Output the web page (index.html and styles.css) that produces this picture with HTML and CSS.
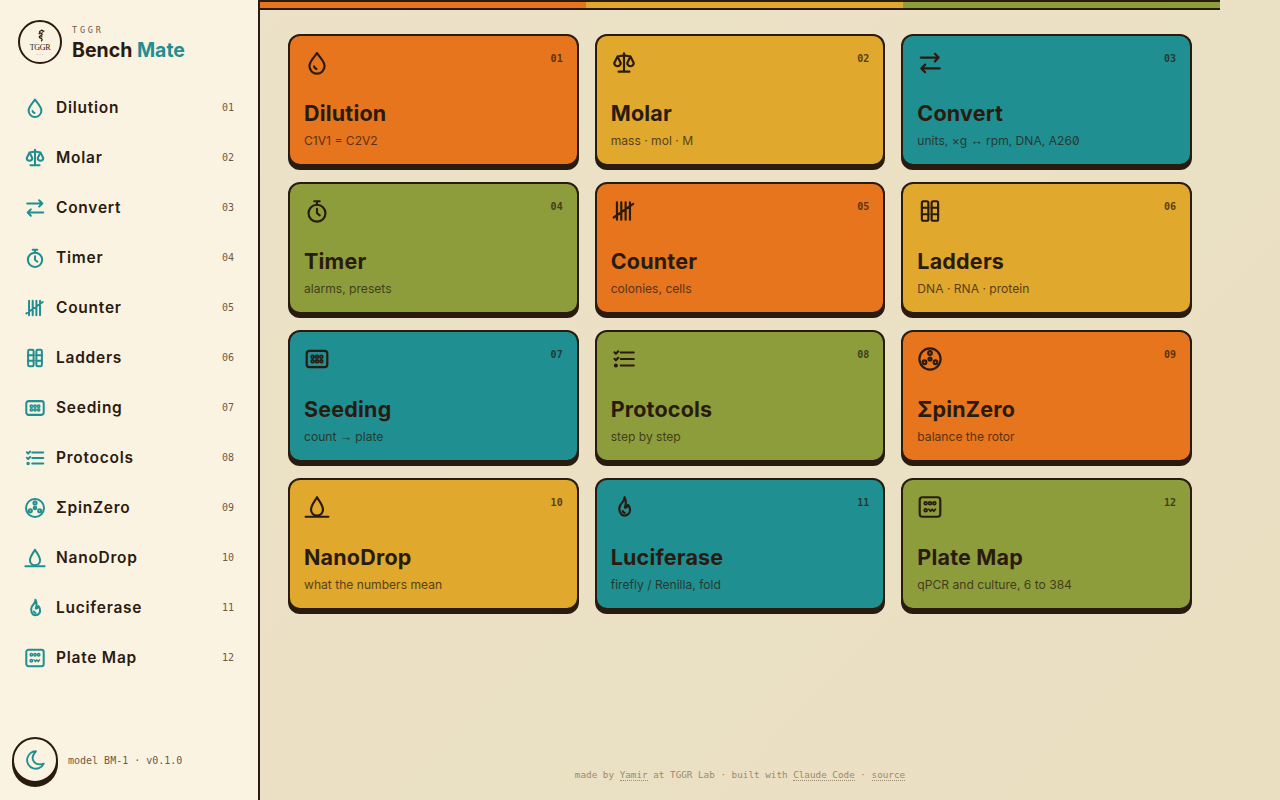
FILE: index.html
```html
<!DOCTYPE html>
<html lang="en">
<head>
  <meta charset="UTF-8" />
  <meta name="viewport" content="width=device-width, initial-scale=1.0"/>
  <title>Bench Mate</title>
  <link rel="stylesheet" href="styles.css">
</head>
<body>

<!-- Icon set, used by both the sidebar and the cards -->
<svg class="icon-defs" aria-hidden="true">
  <symbol id="i-drop" viewBox="0 0 24 24"><path d="M12 2.8C10 6 5 10.400 5 14.800a7 7 0 0 0 14 0C19 10.400 14 6 12 2.800z"/><path d="M9.300 15.200c.3 1.100 1.100 1.900 2.200 2.200"/></symbol>
  <symbol id="i-scale" viewBox="0 0 24 24"><path d="M7 20h10M6 6l6-1 6 1M12 3v17M9 12 6 6l-3 6a3 3 0 0 0 6 0M21 12l-3-6-3 6a3 3 0 0 0 6 0"/></symbol>
  <symbol id="i-convert" viewBox="0 0 24 24"><path d="M16.500 3.500 20 7l-3.500 3.500M3.500 7H20M7.500 13.500 4 17l3.500 3.500M4 17h17"/></symbol>
  <symbol id="i-timer" viewBox="0 0 24 24"><circle cx="12" cy="14" r="7.800"/><path d="M9.500 3h5M12 3v3M12 10v4l2.500 2"/></symbol>
  <symbol id="i-tally" viewBox="0 0 24 24"><path d="M5.500 4v16M9.500 4v16M13.500 4v16M17.500 4v16M2.500 18 20.500 5.500"/></symbol>
  <symbol id="i-ladder" viewBox="0 0 24 24"><rect x="4.500" y="3" width="6" height="18" rx="1.500"/><rect x="13.500" y="3" width="6" height="18" rx="1.500"/><path d="M4.500 9h6M4.500 15h6M13.500 9h6M13.500 15h6"/></symbol>
  <symbol id="i-seed" viewBox="0 0 24 24"><rect x="2.500" y="4.500" width="19" height="15" rx="2.500"/><g class="fine"><circle cx="8" cy="10" r="1.300"/><circle cx="12" cy="10" r="1.300"/><circle cx="16" cy="10" r="1.300"/><circle cx="8" cy="14" r="1.300"/><circle cx="12" cy="14" r="1.300"/><circle cx="16" cy="14" r="1.300"/></g></symbol>
  <symbol id="i-list" viewBox="0 0 24 24"><path d="M3.200 5.800l1.300 1.300 2.200-2.200M3.200 11.800l1.300 1.300 2.200-2.200M9 6h12M9 12h12M9 18h12"/><circle cx="4.500" cy="18" r=".9"/></symbol>
  <symbol id="i-rotor" viewBox="0 0 24 24"><circle cx="12" cy="12" r="9.800"/><circle cx="12" cy="12" r="1.400"/><circle cx="12" cy="6.500" r="1.700"/><circle cx="6.900" cy="15" r="1.700"/><circle cx="17.100" cy="15" r="1.700"/></symbol>
  <symbol id="i-nano" viewBox="0 0 24 24"><path d="M12 3C10.500 6 6.500 10 6.500 14.500a5.500 5.500 0 0 0 11 0C17.500 10 13.500 6 12 3z"/><path d="M1.500 21h21"/></symbol>
  <symbol id="i-flame" viewBox="0 0 24 24"><path d="M12.500 3c.3 3-2.600 5-4 7.500-2.100 4 .3 9.500 4 9.500 3.600 0 5.800-3.300 4.800-7-.3-1.200-.9-2.200-1.500-3-.5 1.500-1.400 2.600-3 2.600 1.200-3.200 1-7-.3-9.600z"/><path d="M10.800 15.800c.3 1 .9 1.500 1.800 1.600"/></symbol>
  <symbol id="i-plate" viewBox="0 0 24 24"><rect x="2.500" y="3" width="19" height="18" rx="2.500"/><g class="fine"><circle cx="8" cy="8.500" r="1.300"/><circle cx="12" cy="8.500" r="1.300"/><circle cx="16" cy="8.500" r="1.300"/><circle cx="8" cy="15" r="1.300"/><path d="M11 14l1.500 2 1.500-2 1.500 2 1.500-2"/></g></symbol>
  <symbol id="i-moon" viewBox="0 0 24 24"><path d="M13 2.500A9.500 9.500 0 1 0 21.500 16C12 19 5 11 13 2.500z"/></symbol>
</svg>

<aside class="sidebar">
  <div class="brand">
    <div class="brand-logo">
      <svg class="brand-mark" viewBox="0 0 24 24" aria-hidden="true"><path d="M15 2c-4 .5-6 3-3 4.500 3.500 1 3.500 3 .5 4-3 .8-3.500 3-.5 4 3 .8 3.500 3 1 5"/><path d="M13 1.500l4 2-3 2M9 7l3 1M15 12l-3 1"/></svg>
      <span class="brand-lab">TGGR</span>
      <span class="brand-dots">· · ·</span>
    </div>
    <div class="brand-text">
      <div class="brand-org">TGGR</div>
      <div class="brand-name">Bench <span class="accent">Mate</span></div>
    </div>
  </div>

  <nav class="nav">
    <a class="nav-item" href="#"><svg class="nav-icon"><use href="#i-drop"/></svg><span class="nav-label">Dilution</span><span class="nav-num">01</span></a>
    <a class="nav-item" href="#"><svg class="nav-icon"><use href="#i-scale"/></svg><span class="nav-label">Molar</span><span class="nav-num">02</span></a>
    <a class="nav-item" href="#"><svg class="nav-icon"><use href="#i-convert"/></svg><span class="nav-label">Convert</span><span class="nav-num">03</span></a>
    <a class="nav-item" href="#"><svg class="nav-icon"><use href="#i-timer"/></svg><span class="nav-label">Timer</span><span class="nav-num">04</span></a>
    <a class="nav-item" href="#"><svg class="nav-icon"><use href="#i-tally"/></svg><span class="nav-label">Counter</span><span class="nav-num">05</span></a>
    <a class="nav-item" href="#"><svg class="nav-icon"><use href="#i-ladder"/></svg><span class="nav-label">Ladders</span><span class="nav-num">06</span></a>
    <a class="nav-item" href="#"><svg class="nav-icon"><use href="#i-seed"/></svg><span class="nav-label">Seeding</span><span class="nav-num">07</span></a>
    <a class="nav-item" href="#"><svg class="nav-icon"><use href="#i-list"/></svg><span class="nav-label">Protocols</span><span class="nav-num">08</span></a>
    <a class="nav-item" href="#"><svg class="nav-icon"><use href="#i-rotor"/></svg><span class="nav-label">ΣpinZero</span><span class="nav-num">09</span></a>
    <a class="nav-item" href="#"><svg class="nav-icon"><use href="#i-nano"/></svg><span class="nav-label">NanoDrop</span><span class="nav-num">10</span></a>
    <a class="nav-item" href="#"><svg class="nav-icon"><use href="#i-flame"/></svg><span class="nav-label">Luciferase</span><span class="nav-num">11</span></a>
    <a class="nav-item" href="#"><svg class="nav-icon"><use href="#i-plate"/></svg><span class="nav-label">Plate Map</span><span class="nav-num">12</span></a>
  </nav>

  <div class="sidebar-foot">
    <button class="theme-btn" type="button" aria-label="Toggle theme"><svg class="theme-icon"><use href="#i-moon"/></svg></button>
    <span class="model">model BM-1 · v0.1.0</span>
  </div>
</aside>

<main class="main">
  <div class="stripe">
    <span class="orange"></span>
    <span class="yellow"></span>
    <span class="olive"></span>
  </div>

  <section class="grid">
    <a class="card orange" href="#"><span class="card-num">01</span><svg class="card-icon"><use href="#i-drop"/></svg><h3>Dilution</h3><p>C1V1 = C2V2</p></a>
    <a class="card yellow" href="#"><span class="card-num">02</span><svg class="card-icon"><use href="#i-scale"/></svg><h3>Molar</h3><p>mass · mol · M</p></a>
    <a class="card teal" href="#"><span class="card-num">03</span><svg class="card-icon"><use href="#i-convert"/></svg><h3>Convert</h3><p>units, ×g <span class="arrow">↔</span> rpm, DNA, A26<span class="slashed">0</span></p></a>
    <a class="card olive" href="#"><span class="card-num">04</span><svg class="card-icon"><use href="#i-timer"/></svg><h3>Timer</h3><p>alarms, presets</p></a>
    <a class="card orange" href="#"><span class="card-num">05</span><svg class="card-icon"><use href="#i-tally"/></svg><h3>Counter</h3><p>colonies, cells</p></a>
    <a class="card yellow" href="#"><span class="card-num">06</span><svg class="card-icon"><use href="#i-ladder"/></svg><h3>Ladders</h3><p>DNA · RNA · protein</p></a>
    <a class="card teal" href="#"><span class="card-num">07</span><svg class="card-icon"><use href="#i-seed"/></svg><h3>Seeding</h3><p>count <span class="arrow">→</span> plate</p></a>
    <a class="card olive" href="#"><span class="card-num">08</span><svg class="card-icon"><use href="#i-list"/></svg><h3>Protocols</h3><p>step by step</p></a>
    <a class="card orange" href="#"><span class="card-num">09</span><svg class="card-icon"><use href="#i-rotor"/></svg><h3>ΣpinZero</h3><p>balance the rotor</p></a>
    <a class="card yellow" href="#"><span class="card-num">10</span><svg class="card-icon"><use href="#i-nano"/></svg><h3>NanoDrop</h3><p>what the numbers mean</p></a>
    <a class="card teal" href="#"><span class="card-num">11</span><svg class="card-icon"><use href="#i-flame"/></svg><h3>Luciferase</h3><p>firefly / Renilla, fold</p></a>
    <a class="card olive" href="#"><span class="card-num">12</span><svg class="card-icon"><use href="#i-plate"/></svg><h3>Plate Map</h3><p>qPCR and culture, 6 to 384</p></a>
  </section>

  <footer class="foot">
    made by <a href="#">Yamir</a> at TGGR Lab · built with <a href="#">Claude Code</a> · <a href="#">source</a>
  </footer>
</main>

</body>
</html>
```

FILE: styles.css
```css
body {
  margin: 0;
  height: 100vh;
  display: flex;
  overflow: hidden;
  font-family: Inter, "Liberation Sans", sans-serif;
  color: #2a1b10;
  background: linear-gradient(135deg, #ece2c8, #eadfc1);
}
a {
  color: inherit;
  text-decoration: none;
}
.icon-defs {
  display: none;
}
symbol {
  overflow: visible;
}
.fine {
  stroke-width: 1.600;
}

/* shared colours */
.orange { background-color: #e6751e; }
.yellow { background-color: #e0a82c; }
.teal { background-color: #1f8f92; }
.olive { background-color: #8e9d3c; }

/* sidebar */
.sidebar {
  width: 258px;
  flex-shrink: 0;
  display: flex;
  flex-direction: column;
  background-color: #fbf3e2;
  border-right: 2px solid #2a1b10;
}
.brand {
  display: flex;
  align-items: center;
  gap: 10px;
  padding: 20px 18px 0;
  height: 44px;
}
.brand-logo {
  width: 40px;
  height: 40px;
  border: 2px solid #2a1b10;
  border-radius: 50%;
  display: flex;
  flex-direction: column;
  align-items: center;
  justify-content: center;
}
.brand-mark {
  width: 15px;
  height: 15px;
  fill: none;
  stroke: #2a1b10;
  stroke-width: 2;
}
.brand-lab {
  font-family: "Liberation Serif", serif;
  font-size: 8px;
  line-height: 8px;
  letter-spacing: -0.3px;
}
.brand-dots {
  font-size: 5px;
  line-height: 4px;
  color: #6b5a48;
}
.brand-text {
  padding-top: 4px;
}
.brand-org {
  font-family: "DejaVu Sans Mono", monospace;
  font-size: 8.500px;
  line-height: 11px;
  letter-spacing: 2.800px;
  margin-bottom: 2px;
  color: #6b5a48;
}
.brand-name {
  font-size: 19.500px;
  line-height: 25px;
  font-weight: 700;
}
.accent {
  color: #1f8f92;
}
.nav {
  display: flex;
  flex-direction: column;
  padding: 19px 12px 0;
}
.nav-item {
  height: 50px;
  display: flex;
  align-items: center;
  gap: 10px;
  padding: 0 12px;
}
.nav-icon {
  width: 22px;
  height: 22px;
  fill: none;
  stroke: #1f8f92;
  stroke-width: 2.200;
  stroke-linecap: round;
  stroke-linejoin: round;
}
.nav-label {
  flex: 1;
  padding-bottom: 2px;
  font-size: 15.500px;
  font-weight: 600;
  letter-spacing: 0.750px;
}
.nav-num {
  padding-bottom: 2px;
  font-family: "DejaVu Sans Mono", monospace;
  font-size: 10px;
  color: #6b5a48;
}
.sidebar-foot {
  margin-top: auto;
  display: flex;
  align-items: center;
  gap: 10px;
  padding: 0 12px 17px;
}
.theme-btn {
  width: 46px;
  height: 46px;
  padding: 0;
  display: flex;
  align-items: center;
  justify-content: center;
  background-color: #fbf3e2;
  border: 2px solid #2a1b10;
  border-radius: 50%;
  box-shadow: 0 4px 0 #2a1b10;
}
.theme-icon {
  width: 22px;
  height: 22px;
  fill: none;
  stroke: #1f8f92;
  stroke-width: 2;
  stroke-linejoin: round;
}
.model {
  font-family: "DejaVu Sans Mono", monospace;
  font-size: 10px;
  color: #6b5a48;
}

/* main area */
.main {
  width: 960px;
  display: flex;
  flex-direction: column;
}
.stripe {
  display: grid;
  grid-template-columns: 326px 1fr 1fr;
  height: 6px;
  border-top: 2px solid #2a1b10;
  border-bottom: 2px solid #2a1b10;
}
.grid {
  display: grid;
  grid-template-columns: repeat(3, 1fr);
  grid-auto-rows: 132px;
  gap: 16px;
  padding: 24px 28px 0;
}
.card {
  position: relative;
  display: flex;
  flex-direction: column;
  padding: 14px 14px 15px;
  border: 2px solid #2a1b10;
  border-radius: 12px;
  box-shadow: 0 4px 0 #2a1b10;
}
.card-num {
  position: absolute;
  top: 16px;
  right: 14px;
  font-family: "DejaVu Sans Mono", monospace;
  font-size: 10px;
  font-weight: 700;
  line-height: 14px;
  opacity: 0.75;
}
.card-icon {
  width: 26px;
  height: 26px;
  fill: none;
  stroke: #2a1b10;
  stroke-width: 2;
  stroke-linecap: round;
  stroke-linejoin: round;
}
.card h3 {
  margin: auto 0 0;
  font-size: 21.500px;
  line-height: 28px;
  font-weight: 700;
  letter-spacing: 0.200px;
}
.card p {
  margin: 6px 0 0;
  font-size: 12.100px;
  line-height: 16px;
  opacity: 0.75;
}
.arrow {
  font-family: "Liberation Sans", sans-serif;
}
.slashed {
  font-feature-settings: "zero";
}
.foot {
  margin-top: auto;
  padding-bottom: 19px;
  text-align: center;
  font-family: "DejaVu Sans Mono", monospace;
  font-size: 9.300px;
  line-height: 12px;
  color: #9a8a70;
}
.foot a {
  border-bottom: 1px dotted #9a8a70;
}
```
